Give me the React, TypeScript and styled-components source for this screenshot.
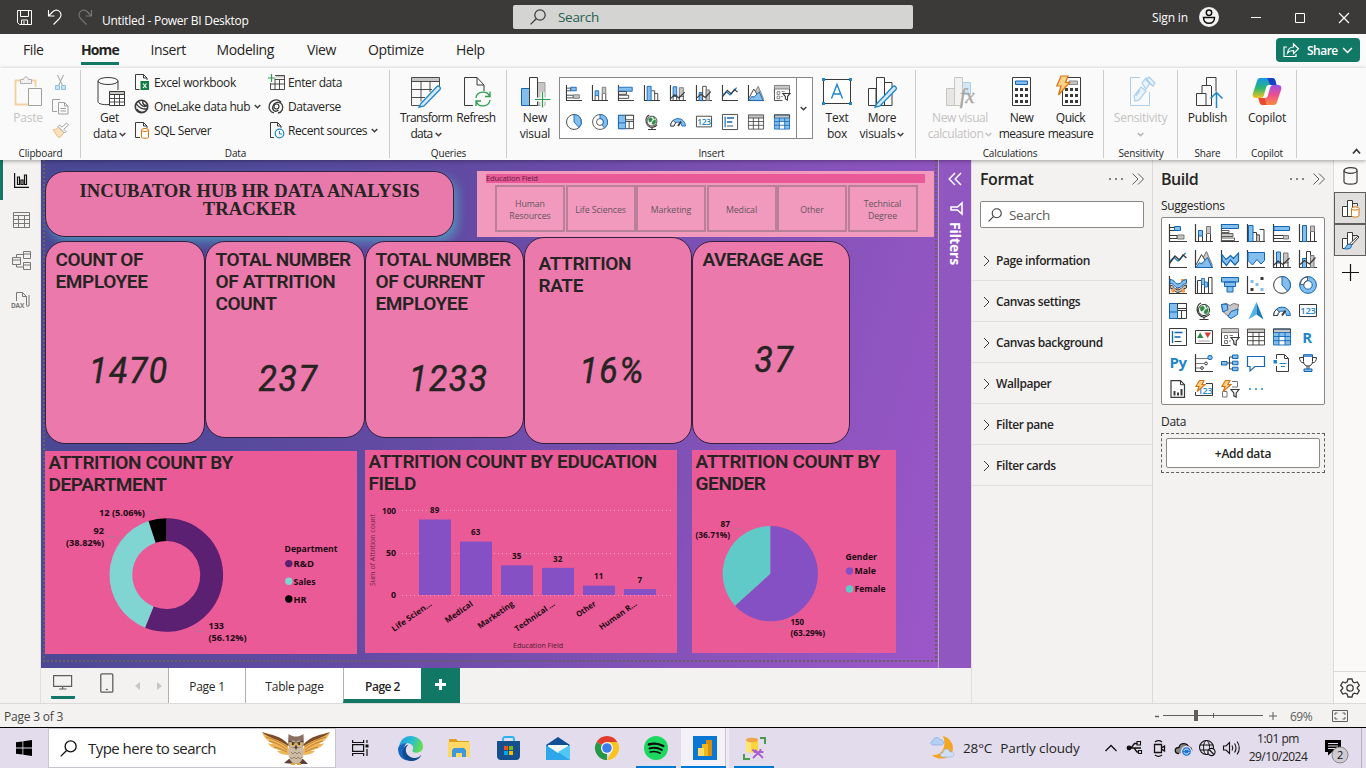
import React from "react";
import styled, { createGlobalStyle } from "styled-components";

const D = "#3b3a39";
const B = "#1366b4";
const L = "#83beec";
const G = "#c8c6c4";
const SKY = "#1f86c9";
const GREEN = "#117865";

const Global = createGlobalStyle`
  * { box-sizing: border-box; }
  body {
    margin: 0;
    overflow: hidden;
    font-family: "Open Sans", "Noto Sans", sans-serif;
    font-size: 12px;
    color: #252423;
    letter-spacing: -0.025em;
  }
  svg { display: block; flex: none; overflow: visible; }
`;

/* ---------- shell ---------- */
const Window = styled.div`
  width: 1366px;
  height: 768px;
  display: flex;
  flex-direction: column;
  background: #f3f2f1;
  overflow: hidden;
`;
const TitleBar = styled.header`
  height: 34px;
  flex: none;
  display: flex;
  align-items: center;
  background: #3b3a39;
  color: #fff;
`;
const QuickIcons = styled.div`
  width: 102px;
  padding-left: 16px;
  display: flex;
  align-items: center;
  gap: 14px;
`;
const DocTitle = styled.div`
  width: 411px;
  padding-top: 7px;
  font-size: 12px;
  letter-spacing: -0.27px;
`;
const TopSearch = styled.div`
  width: 400px;
  height: 24px;
  margin-right: 239px;
  padding-left: 17px;
  display: flex;
  align-items: center;
  gap: 12px;
  border-radius: 2px;
  background: #d4d4d2;
  color: #27604f;
  font-size: 13.5px;
`;
const SignIn = styled.div`
  width: 47px;
  font-size: 12px;
  letter-spacing: -0.15px;
`;
const WinControls = styled.div`
  display: flex;
  align-items: center;
  gap: 28px;
  padding-left: 29px;
`;

/* ---------- ribbon ---------- */
const TabStrip = styled.nav`
  height: 34px;
  flex: none;
  display: flex;
  align-items: flex-start;
  background: #fafafa;
  padding: 4px 6px 0 23px;
`;
const RibbonTab = styled.div<{ $w: number; $active?: boolean }>`
  width: ${(p) => p.$w}px;
  line-height: 24px;
  font-size: 14px;
  white-space: nowrap;
  letter-spacing: -0.4px;
  font-weight: ${(p) => (p.$active ? 700 : 400)};
  span {
    display: inline-block;
    height: 27px;
    letter-spacing: ${(p) => (p.$active ? "-0.9px" : "inherit")};
    border-bottom: ${(p) => (p.$active ? `3px solid ${GREEN}` : "none")};
  }
`;
const ShareButton = styled.button`
  width: 84px;
  height: 24px;
  margin-left: auto;
  padding: 0 0 0 7px;
  display: flex;
  align-items: center;
  gap: 4px;
  border: 0;
  border-radius: 4px;
  background: ${GREEN};
  color: #fff;
  font: 600 12px "Open Sans", sans-serif;
  letter-spacing: -0.5px;
  span { padding-left: 4px; }
`;
const Ribbon = styled.div`
  height: 92px;
  flex: none;
  display: flex;
  position: relative;
  z-index: 1;
  background: #fafafa;
  box-shadow: 0 1px 4px rgba(0, 0, 0, 0.35);
`;
const Group = styled.section<{ $w: number }>`
  width: ${(p) => p.$w}px;
  flex: none;
  display: flex;
  flex-direction: column;
  background: linear-gradient(#cfcdcb, #cfcdcb) right 2px / 1px 88px no-repeat;
`;
const GroupBody = styled.div<{ $pad?: number }>`
  height: 78px;
  display: flex;
  padding-left: ${(p) => p.$pad ?? 0}px;
`;
const GroupName = styled.div`
  height: 14px;
  line-height: 15px;
  text-align: center;
  font-size: 10px;
  letter-spacing: -0.15px;
`;
const BigButton = styled.div<{ $w: number; $off?: boolean; $ls?: number }>`
  width: ${(p) => p.$w}px;
  flex: none;
  display: flex;
  flex-direction: column;
  align-items: center;
  padding-top: 7px;
  font-size: 12px;
  line-height: 16px;
  text-align: center;
  white-space: nowrap;
  letter-spacing: ${(p) => p.$ls ?? -0.25}px;
  color: ${(p) => (p.$off ? "#c4c2c0" : "#252423")};
  > svg { margin-bottom: 2px; }
`;
const DropLine = styled.span`
  display: flex;
  align-items: center;
  justify-content: center;
  gap: 2px;
  min-height: 16px;
`;
const SmallColumn = styled.div<{ $w: number; $gap?: number }>`
  width: ${(p) => p.$w}px;
  display: flex;
  flex-direction: column;
  padding-top: 2px;
`;
const SmallButton = styled.div`
  height: 24px;
  display: flex;
  align-items: center;
  gap: 3px;
  white-space: nowrap;
  letter-spacing: -0.4px;
  > svg:last-child:not(:first-child) { margin-left: 1px; }
`;
const Gallery = styled.div`
  width: 254px;
  height: 62px;
  margin-top: 9px;
  display: flex;
  border: 1px solid #8a8886;
  background: #fff;
`;
const GalleryGrid = styled.div`
  width: 237px;
  padding: 0 0 0 1px;
  display: grid;
  grid-template-columns: repeat(9, 26px);
  grid-auto-rows: 29px;
  place-items: center;
  border-right: 1px solid #8a8886;
`;
const GalleryMore = styled.div`
  flex: 1;
  display: flex;
  align-items: center;
  justify-content: center;
  padding-right: 2px;
`;
const RibbonCollapse = styled.div`
  margin-left: auto;
  align-self: flex-end;
  padding: 0 5px 5px 0;
`;

/* ---------- work area ---------- */
const Work = styled.div`
  height: 543px;
  flex: none;
  display: flex;
`;
const ViewRail = styled.aside`
  width: 41px;
  flex: none;
  display: flex;
  flex-direction: column;
  border-right: 1px solid #e1dfdd;
`;
const ViewItem = styled.div<{ $on?: boolean }>`
  height: 40px;
  display: flex;
  align-items: center;
  justify-content: center;
  padding-right: 1px;
  border-left: 3px solid ${(p) => (p.$on ? GREEN : "transparent")};
`;
const Stage = styled.main`
  width: 931px;
  flex: none;
  display: flex;
  flex-direction: column;
  border-right: 1px solid #e1dfdd;
`;
const CanvasRow = styled.div`
  height: 508px;
  display: flex;
`;
const Canvas = styled.div`
  width: 897px;
  padding-left: 2px;
  background: linear-gradient(107deg, #4a4793 0%, #4d4896 16%, #664ba5 45%, #8452b8 73%, #9c57c9 100%);
`;
const ReportPage = styled.div`
  width: 894px;
  height: 502px;
  padding: 11px 2px 2px;
  background:
    repeating-linear-gradient(#66605f 0 2px, transparent 2px 4px) left top / 2px 100% no-repeat,
    repeating-linear-gradient(#66605f 0 2px, transparent 2px 4px) right top / 2px 100% no-repeat,
    repeating-linear-gradient(90deg, #66605f 0 2px, transparent 2px 4px) left bottom / 100% 2px no-repeat;
`;
const FilterPane = styled.div`
  width: 33px;
  display: flex;
  flex-direction: column;
  align-items: center;
  gap: 16px;
  border-left: 1px solid #b4a8b8;
  background: #9157c1;
  color: #fff;
  padding-top: 12px;
`;
const FilterText = styled.div`
  writing-mode: vertical-rl;
  font-size: 14px;
  font-weight: 700;
  letter-spacing: -0.1px;
  line-height: 20px;
  margin-top: -9px;
`;
const Row = styled.div<{ $mt?: number; $h?: number }>`
  display: flex;
  align-items: flex-start;
  margin-top: ${(p) => p.$mt ?? 0}px;
  height: ${(p) => p.$h}px;
`;
const Banner = styled.h1`
  width: 409px;
  height: 66px;
  margin: 0 23px 0 0;
  padding-top: 10px;
  border: 1px solid #33203f;
  border-radius: 20px;
  background: #ea79ab;
  box-shadow: 4px 5px 10px 0 rgba(80, 175, 200, 0.65);
  font: 700 18.6px/18px "Liberation Serif", serif;
  letter-spacing: 0.04px;
  text-align: center;
`;
const Slicer = styled.div`
  width: 457px;
  height: 66px;
  flex: none;
  padding: 3px 9px 0;
  background: #f29abd;
`;
const SlicerHead = styled.div`
  height: 9px;
  line-height: 9px;
  font-size: 7.5px;
  letter-spacing: -0.1px;
  color: #5a1f40;
  background: #ea5a98;
`;
const SlicerTiles = styled.div`
  display: grid;
  grid-template-columns: repeat(6, 70px);
  gap: 0.5px;
  padding: 2px 0 0 9px;
`;
const SlicerTile = styled.div`
  height: 47px;
  padding-top: 2px;
  display: flex;
  align-items: center;
  justify-content: center;
  text-align: center;
  border: 2px solid #b88099;
  font-size: 8.8px;
  line-height: 12px;
  letter-spacing: -0.1px;
  color: #66565f;
`;
const KpiCard = styled.div<{ $w: number; $h: number; $mt: number; $pl?: number; $drop: number }>`
  width: ${(p) => p.$w}px;
  height: ${(p) => p.$h}px;
  margin-top: ${(p) => p.$mt}px;
  flex: none;
  display: grid;
  grid-template-rows: 74px 40px;
  row-gap: ${(p) => p.$drop}px;
  padding-left: ${(p) => p.$pl ?? 9.5}px;
  border: 1px solid #33203f;
  border-radius: 20px;
  background: #eb79ab;
`;
const VisualTitle = styled.h2<{ $top?: number }>`
  margin: 0;
  padding-top: ${(p) => p.$top ?? 7}px;
  font: 600 19px/22px Roboto, sans-serif;
  letter-spacing: -0.38px;
  white-space: pre-line;
`;
const KpiValue = styled.div<{ $shift?: number }>`
  display: flex;
  align-items: center;
  justify-content: center;
  padding-right: ${(p) => p.$shift ?? 3}px;
  font: italic 400 37.5px/40px Roboto, sans-serif;
  -webkit-text-stroke: 0.5px #252423;
  letter-spacing: 1.7px;
  transform: scaleX(0.9);
`;
const ChartPanel = styled.div<{ $w: number; $mt?: number; $mr?: number }>`
  width: ${(p) => p.$w}px;
  height: 203px;
  margin: ${(p) => p.$mt ?? 0}px ${(p) => p.$mr ?? 0}px 0 0;
  flex: none;
  background: #ea5a96;
  ${VisualTitle} { height: 46px; padding: 1px 0 0 3.5px; }
`;
const ChartText = styled.text`
  font-family: "Open Sans", sans-serif;
  letter-spacing: 0;
`;

/* ---------- page tabs ---------- */
const PageBar = styled.div`
  height: 35px;
  display: flex;
`;
const LayoutSwitch = styled.div`
  width: 127px;
  display: flex;
  align-items: flex-start;
`;
const DesktopView = styled.div`
  width: 24px;
  margin: 6px 25px 0 10px;
  padding-bottom: 6px;
  border-bottom: 3px solid ${GREEN};
  border-radius: 1px;
`;
const PhoneView = styled.div`
  padding-top: 5px;
  margin-right: 21px;
`;
const Arrows = styled.div`
  display: flex;
  gap: 17px;
  padding-top: 14px;
`;
const PageTab = styled.div<{ $w: number; $on?: boolean }>`
  width: ${(p) => p.$w}px;
  border-left: 1px solid #b3b0ad;
  border-bottom: ${(p) => (p.$on ? `4px solid ${GREEN}` : "0")};
  background: #fff;
  text-align: center;
  line-height: 37px;
  letter-spacing: ${(p) => (p.$on ? "-0.5px" : "-0.25px")};
  font-weight: ${(p) => (p.$on ? 600 : 400)};
`;
const AddPage = styled.div`
  width: 39px;
  padding-bottom: 2px;
  display: flex;
  align-items: center;
  justify-content: center;
  background: ${GREEN};
`;

/* ---------- side panes ---------- */
const Pane = styled.aside<{ $w: number }>`
  width: ${(p) => p.$w}px;
  flex: none;
  border-right: 1px solid #dddbd9;
`;
const PaneHead = styled.div`
  height: 38px;
  display: flex;
  align-items: center;
  gap: 7px;
  padding: 0 7px 0 8px;
  h3 {
    margin: 0 auto 0 0;
    font-size: 16px;
    font-weight: 600;
    letter-spacing: -0.45px;
  }
`;
const PaneSearch = styled.div`
  width: 164px;
  height: 27px;
  margin: 3px 0 12px 8px;
  padding-left: 7px;
  display: flex;
  align-items: center;
  gap: 7px;
  border: 1px solid #8a8886;
  border-radius: 2px;
  background: #fff;
  color: #605e5c;
  font-size: 13.5px;
`;
const FormatRow = styled.div`
  height: 41px;
  padding-top: 1px;
  display: flex;
  align-items: center;
  gap: 5px;
  padding-left: 11px;
  border-bottom: 1px solid #e1dfdd;
  font-weight: 600;
  letter-spacing: -0.4px;
`;
const FieldLabel = styled.div`
  padding-left: 8px;
  line-height: 16px;
`;
const VisualPicker = styled.div`
  width: 164px;
  height: 188px;
  margin: 3px 0 9px 8px;
  padding: 2px 0 0 3px;
  display: grid;
  grid-template-columns: repeat(6, 26px);
  grid-auto-rows: 26px;
  place-items: center;
  border: 1px solid #8a8886;
  border-radius: 2px;
  background: #fff;
`;
const DropZone = styled.div`
  width: 164px;
  height: 40px;
  margin: 3px 0 0 8px;
  padding: 4px;
  border: 1px dashed #605e5c;
`;
const AddData = styled.div`
  height: 30px;
  line-height: 29px;
  text-align: center;
  border: 1px solid #8a8886;
  border-radius: 2px;
  background: #fff;
  font-weight: 600;
`;
const PaneRail = styled.aside`
  flex: 1;
  display: flex;
  flex-direction: column;
  background: #faf9f8;
`;
const RailButton = styled.div<{ $on?: boolean; $h: number }>`
  height: ${(p) => p.$h}px;
  display: flex;
  align-items: center;
  justify-content: center;
  border: 1px solid ${(p) => (p.$on ? "#605e5c" : "transparent")};
  background: ${(p) => (p.$on ? "#e1dfdd" : "transparent")};
`;
const RailSettings = styled.div`
  margin-top: auto;
  height: 32px;
  display: flex;
  align-items: center;
  justify-content: center;
  border-top: 1px solid #dddbd9;
`;

/* ---------- status + taskbar ---------- */
const StatusBar = styled.footer`
  height: 25px;
  flex: none;
  display: flex;
  align-items: center;
  justify-content: space-between;
  padding: 1px 18px 0 4px;
  border-top: 1px solid #dddbd9;
  border-bottom: 1px solid #000;
  color: #484644;
  letter-spacing: -0.2px;
`;
const ZoomControls = styled.div`
  display: flex;
  align-items: center;
  color: #605e5c;
  letter-spacing: -0.5px;
  span { width: 55px; padding-left: 13px; }
`;
const Taskbar = styled.div`
  height: 40px;
  flex: none;
  display: flex;
  background: #e3dcec;
`;
const StartButton = styled.div`
  width: 48px;
  display: flex;
  align-items: center;
  justify-content: center;
`;
const TaskSearch = styled.div`
  width: 288px;
  padding-left: 11px;
  display: flex;
  align-items: center;
  gap: 11px;
  border: 1px solid #c9c5cf;
  background: #fff;
  font-size: 15px;
  letter-spacing: -0.53px;
  span { width: 162px; }
`;
const TaskItem = styled.div<{ $w?: number; $run?: boolean; $active?: boolean }>`
  width: ${(p) => p.$w ?? 49}px;
  margin-left: ${(p) => (p.$active ? 2 : 0)}px;
  display: flex;
  align-items: center;
  justify-content: center;
  background:
    ${(p) => (p.$run ? "linear-gradient(#0078d7, #0078d7) center bottom / 40px 2px no-repeat" : p.$active ? "linear-gradient(#0078d7, #0078d7) left bottom / 45px 2px no-repeat" : "none")}
    ${(p) => (p.$active ? ", linear-gradient(90deg, #f4f1f8 44px, #c9c3d2 44px, #c9c3d2 45px, #efebf4 45px)" : "")};
`;
const Tray = styled.div`
  margin-left: auto;
  display: flex;
  align-items: center;
`;
const Weather = styled.div`
  width: 172px;
  display: flex;
  align-items: center;
  gap: 8px;
  font-size: 13.5px;
  letter-spacing: -0.12px;
`;
const Clock = styled.div`
  width: 78px;
  padding-right: 6px;
  font-size: 12px;
  line-height: 18px;
  text-align: center;
  letter-spacing: -0.5px;
`;

/* ---------- glyphs ---------- */
const Chevron = ({ c = D, s = 7, w = 1.6 }: { c?: string; s?: number; w?: number }) => (
  <svg width={s} height={s} viewBox="0 0 8 8" fill="none" stroke={c} strokeWidth={w}><path d="M.8 2.2 4 5.4l3.2-3.2" /></svg>
);
const Magnifier = ({ s = 16, c = D }: { s?: number; c?: string }) => (
  <svg width={s} height={s} viewBox="0 0 16 16" fill="none" stroke={c} strokeWidth="1.25"><circle cx="10" cy="6" r="5.2" /><path d="M6.2 9.8.6 15.4" /></svg>
);
const DoubleChevron = ({ c = "#605e5c", flip, w = 1 }: { c?: string; flip?: boolean; w?: number }) => (
  <svg width="14" height="14" viewBox="0 0 14 14" fill="none" stroke={c} strokeWidth={w}>
    <path d={flip ? "M7 1 1.2 7 7 13M13 1 7.2 7 13 13" : "M1.5 1.5 7 7l-5.5 5.5M7 1.5 12.5 7 7 12.5"} />
  </svg>
);
const Dots = ({ c = "#605e5c" }: { c?: string }) => (
  <svg width="16" height="4" viewBox="0 0 16 4" fill={c}><circle cx="2" cy="2" r="1" /><circle cx="8" cy="2" r="1" /><circle cx="14" cy="2" r="1" /></svg>
);

const axis = <path d="M.5 0V17.500H18" stroke={D} strokeWidth="1.200" />;
const globe = (
  <g>
    <circle cx="9" cy="8" r="5.600" fill="#f3f2f1" stroke={D} />
    <path d="M5 5.500 8 4l1.500 2L8 8.500 6 9zM10 8l3-1.500v3L11 12l-2-1zM10.500 3l2 1.200-1 1.600z" fill="#2e8b46" stroke="#2e8b46" strokeWidth=".6" />
    <path d="M6 1C1.500 3 .8 9.500 4.500 13s8 2 10.300-1M9 14.500v3M4.500 17.500h9" stroke={D} strokeWidth="1.200" />
  </g>
);
const bolt = <path d="M4.500.5H9L7 4.500h3L2.200 11.500 4 6.500H.8z" fill="#fcd28b" stroke="#d9730d" strokeWidth="1.100" />;
const funnel = <path d="M10 9.500h8l-2.800 3.500v4l-2.400-1.200V13z" fill="#fff" stroke={D} strokeWidth="1.200" />;

const ICONS: Record<string, React.ReactNode> = {
  stackBar: <>{axis}<path d="M1 3.500h4.500v3H1M1 11.500h7v3H1" stroke={D} /><path d="M5.500 2.500h6v4h-6z" fill={L} stroke={B} /><path d="M8.500 11h6.500v4H8.500z" fill={G} stroke="#797775" /></>,
  stackCol: <>{axis}<path d="M3.500 12v5.500M7.500 12v5.500M11.500 9.500v8M15.500 9.500v8" stroke={D} /><path d="M3.500 6.500h4V12h-4z" fill={L} stroke={B} /><path d="M11.500 2.500h4v7h-4z" fill={G} stroke="#797775" /></>,
  clusterBar: <>{axis}<path d="M.5 2.500h15.500v4.500H.5z" fill={L} stroke={B} /><path d="M.5 7.500h9v3h-9M.5 11.500h11.500v3.500H.5" stroke={D} /></>,
  clusterBar2: <>{axis}<path d="M.5.500h17v4H.5z" fill={L} stroke={B} /><path d="M.5 6.500h7.500v2H.5zM.5 14h13v2.500H.5z" fill="#fff" stroke="#605e5c" /><path d="M.5 9.500h11.500v3H.5z" fill={G} stroke="#605e5c" /></>,
  clusterCol: <>{axis}<path d="M3.500 1.500H8v16H3.500z" fill={L} stroke={B} /><path d="M8.500 6.500H12v11M12 9.500h3.500v8" stroke={D} /></>,
  clusterCol2: <>{axis}<path d="M1.500 1.500H6v16H1.500z" fill={L} stroke={B} /><path d="M6 8.500h3.500v9M12.500 5.500H17v12M9.500 11h3v6.500" stroke={D} /><path d="M9.500 11h3v6.500h-3z" fill={G} stroke="#605e5c" /></>,
  fullBar: <>{axis}<path d="M1 2.500h15.500v4H1z" fill={L} stroke={B} /><path d="M1 11.500h9.500v3H1" stroke={D} /><path d="M10.500 11.500h5v3.500h-5z" fill={G} stroke="#797775" /></>,
  fullCol: <>{axis}<path d="M3.500 1.500h4v16h-4z" fill={L} stroke={B} /><path d="M11.500 7.500h4v10h-4z" stroke={D} /><path d="M11.500 2h4v5.500h-4z" fill={G} stroke="#797775" /></>,
  lineStack: <>{axis}<path d="M3.500 2h4v11h-4z" fill={L} stroke={B} /><path d="M10.500 3h4.500v10h-4.500z" fill={G} stroke="#797775" /><path d="M3.500 13v4.500M7.500 11v6.500M10.500 12v5.500M15 12v5.500" stroke={D} /><path d="m1 15 4-4 5 3.500L16.500 8" stroke={D} strokeWidth="1.300" /></>,
  lineCluster: <>{axis}<path d="M3.500 8.500h4v9h-4z" fill={L} stroke={B} /><path d="M7.500 1.500h4v16h-4z" fill="#fff" stroke={D} /><path d="M11.500 5.500H15v12h-3.500z" fill={G} stroke="#797775" /><path d="m1 14.500 4.500-4L10.500 14l6-6.500" stroke={D} strokeWidth="1.300" /></>,
  line: <>{axis}<path d="m.5 11.500 4.500-4 4 3.500 7.500-8" stroke={SKY} strokeWidth="1.500" /><path d="M.5 13.500 6 6l4.500 4L14 5l3.500 3" stroke={D} strokeWidth="1.300" /></>,
  area: <>{axis}<path d="M5.500 12 11.500 1.500 17 14.500v3H9z" fill={G} stroke="#797775" /><path d="M1 15 6.500 4.500 10.500 11" fill="#fff" stroke={D} /><path d="m1 17.500 3.500-5 2 1.500 6-6.500L17 17.500z" fill={L} stroke={B} /></>,
  stackArea: <>{axis}<path d="m1 4.500 4 5 4.500-4 3 3 5-5.500v8l-3.500 4-4.500-5-4 5.500L1 10.500z" fill={L} stroke={B} strokeWidth="1.200" /></>,
  fullArea: <>{axis}<path d="M1 2.500h16.500v8L14 14 10 9.500 5.500 15 1 10.500z" fill={L} stroke={B} /></>,
  ribbon: <>{axis}<path d="M2.500 4.500h3v3h-3zM12 3h4v3h-4zM2.500 12.500h3v3h-3zM12 13h4v3h-4zM7 10h3.500v3H7z" fill="#f59b42" /><path d="M1 3.500c5 0 4.500 4.500 8 4.500s4-4.500 8.500-4.500v4c-4.500 0-5 4.500-8.500 4.500S6 7.500 1 7.500z" fill={L} stroke={B} /><path d="M1 9c4 0 4.500 5 8 5s4-5 8.500-5v3c-4 0-5 4.500-8.500 4.500S5 12 1 12z" fill={G} stroke={D} /><path d="M2.500 13h3v3.500h-3zM12.500 13h3v3.500h-3z" fill="#f59b42" /></>,
  waterfall: <>{axis}<path d="M2.500 4.500h4v13M6.500 4.500v13M2.500 4.500v13M13.500 1.500H17v16h-3.500zM9.500 8.500V17M13.500 10v7.500" stroke={D} /><path d="M6.500 2.500h3v6h-3zM9.500 6h3v5h-3z" fill={L} stroke={B} strokeWidth=".8" /></>,
  funnelChart: <path d="M.5 1.500h17v4.500H.5zM3.500 6h11v4.500h-11zM6 10.500h6V16H6z" fill={L} stroke={B} />,
  scatter: <>{axis}<path d="M13.500 1h3v3h-3zM3.500 12h3v3h-3z" fill={D} /><path d="M3.500 4h3v3h-3zM8.500 7h3v3h-3zM13.500 12h3v3h-3z" fill={L} /></>,
  pie: <><circle cx="9" cy="9" r="8.400" fill="#fff" stroke={D} /><path d="M9 .6A8.400 8.400 0 0 1 14.600 15.200L9 9z" fill={L} stroke={B} /></>,
  donut: <><circle cx="9" cy="9" r="6.300" stroke={L} strokeWidth="4.200" /><circle cx="9" cy="9" r="8.400" stroke={B} /><circle cx="9" cy="9" r="4.200" stroke={B} /><path d="M1.500 8.500h3.300C5 6.500 6.500 4.800 8.500 4.600V1.200C4.500 1.200 1.500 4.500 1.500 8.500z" fill="#fff" stroke={D} strokeWidth=".8" /></>,
  donutSmall: <><circle cx="9" cy="9" r="8.400" stroke={D} strokeWidth=".9" /><circle cx="9" cy="9" r="3.900" stroke={D} strokeWidth=".9" /><path d="M9 .6a8.400 8.400 0 0 1 5 15.200l-2.600-3.700A3.900 3.900 0 0 0 9 5.100z" fill={L} stroke={B} /></>,
  treemap: <><path d="M.5 1.500h17v15H.5zM8.500 8.500h9M12.500 8.500v8" stroke={D} fill="#fff" /><path d="M.5 1.500h8v15h-8zM.5 10h8" fill={L} stroke={B} /><path d="M8.500 1.500h9v5h-9z" fill="#fff" stroke={D} /></>,
  globe,
  shapeMap: <><path d="M.5 2.500 5 1.500l4 2 3.500-2 5 1-1 7-6 6-5-2.500-4-4z" fill={G} stroke="#797775" /><path d="M.5 2.500 6 2l1 5.500-5 2.500zM10 9.500l7-2.500-.5 5.500-6.500 4-3-2z" fill={L} stroke={B} /></>,
  arrow: <><path d="M9.500 0 1.500 17.500l8-5z" fill="#4fb3e8" /><path d="m9.500 0 7 17.500-7-5z" fill="#1a77b8" /></>,
  gauge: <><path d="M.6 13.500a8.400 8.400 0 0 1 16.800 0h-4a4.400 4.400 0 0 0-8.800 0z" fill={L} stroke={B} /><path d="M.6 13.500a8.400 8.400 0 0 1 3-6.400l2.800 3a4.400 4.400 0 0 0-1.800 3.400z" fill="#fff" stroke={D} /><path d="m9 13.500 3.500-5" stroke={D} strokeWidth="2" /></>,
  card: <><path d="M.5 2.500h17v12H.5z" fill="#fff" stroke={D} /><text x="9" y="12.300" fontSize="9.500" fontWeight="600" textAnchor="middle" fill={SKY} letterSpacing="-.3">123</text></>,
  multiCard: <><path d="M.5.500h17v17H.5z" fill="#fff" stroke={D} /><path d="M3.500 3v12" stroke={B} strokeWidth="1.300" /><path d="M5.500 4.500h8M5.500 9h6" stroke={B} strokeWidth="1.700" /><path d="M5.500 13.500h7" stroke={D} /></>,
  kpi: <><path d="M.5 2.500h17v13H.5z" fill="#fff" stroke={D} /><path d="m5.200 4.500 3.200 5.500H2z" fill="#2e8b46" /><path d="M9.500 4.500H16L12.700 10z" fill="#d83b3b" /><path d="M3.500 13h11" stroke="#a19f9d" /></>,
  slicer: <><path d="M.5.500h17v4H.5z" fill={G} stroke="#797775" /><path d="M.5 4.500v13h9M17.500 4.500V9" stroke={D} /><path d="M3.500 7.500h3v3h-3zM3.500 12.500h3v3h-3zM8.500 7.500H12M8 13h2" stroke="#797775" />{funnel}</>,
  table: <><path d="M.5 1h17v3.500H.5z" fill={G} /><path d="M.5 1h17v16H.5zM.5 4.500h17M.5 8.500h17M.5 12.700h17M6 4.500V17M12 4.500V17" stroke={D} strokeWidth=".9" /></>,
  matrix: <><path d="M.5 4.500h5.500v12.500H.5zM6 4.500h11.500V8.500H6zM12 8.500h5.500V17H12z" fill={L} /><path d="M.5 1h17v3.500H.5z" fill={G} /><path d="M.5 1h17v16H.5zM.5 4.500h17M.5 8.500h17M.5 12.700h17M6 4.500V17M12 4.500V17" stroke={B} strokeWidth=".9" /><path d="M.5 4.500V1h17v3.500" stroke={D} /></>,
  r: <text x="8" y="14.500" fontSize="15" fontWeight="700" textAnchor="middle" fill={SKY}>R</text>,
  py: <text x="9" y="14" fontSize="15" fontWeight="700" textAnchor="middle" fill={SKY} letterSpacing="-.6">Py</text>,
  influencer: <>{axis}<path d="M1 4.500h12M1 9.500h8M1 14h4" stroke="#797775" /><circle cx="15" cy="3.500" r="2.200" fill={L} stroke={B} /><circle cx="11" cy="9.500" r="1.400" stroke={D} /><circle cx="7" cy="14" r="1.400" stroke={D} /></>,
  decomposition: <><path d="M6 9h6M8.500 3v12M8.500 3H12M8.500 15H12" stroke={D} /><path d="M.5 7.500H6V11H.500zM11.500 1h5.500v3.500h-5.500zM11.500 7.200h5.500v3.500h-5.500zM11.500 13.200h5.500v3.500h-5.500z" fill={L} stroke={B} /></>,
  qna: <path d="M.5 2.500h17v10H8l-5 4.500v-4.500H.500z" fill="#fff" stroke={B} strokeWidth="1.200" />,
  narrative: <><path d="M3.500 5V.5h8l4 4v13h-12V12" stroke={D} /><path d="M11.500.5v4h4" stroke={D} /><path d="M.5 6h3.500v3.500H.500z" fill={SKY} /><path d="M6.500 9.500h7M8 12.500h4" stroke={SKY} strokeWidth="1.200" /></>,
  trophy: <><path d="M4.500 1.500h9v6c0 3-2 4.500-4.500 4.500S4.500 10.500 4.500 7.500z" fill="#fff" stroke={D} /><path d="M4.500 3.500h-4c0 3 1.500 5.500 4.500 5.500M13.500 3.500h4c0 3-1.500 5.500-4.500 5.500M8 12v3M10 12v3" stroke={D} /><path d="M4.500.700h9v1.500h-9zM5 15h8v2.500H5z" fill={L} stroke={B} /></>,
  paginated: <><path d="M2 .7h9.500l4 4v12.600H2z" fill="#fff" stroke={D} strokeWidth="1.200" /><path d="M11.500.700v4h4" stroke={D} /><path d="M4.500 11h2v4.500h-2zM8 12.500h2v3H8zM11.500 9h2v6.500h-2z" fill={D} /></>,
  cardNew: <><path d="M11 3.500h6.500v12H.500V12" stroke={D} /><text x="10" y="13.600" fontSize="9" fontWeight="600" textAnchor="middle" fill={SKY} letterSpacing="-.3">123</text>{bolt}</>,
  slicerNew: <><path d="M11 1.500h5.500v5.500H11M1.500 11.500H6V17H1.500z" stroke="#797775" />{bolt}{funnel}</>,
};
const VisualIcon = ({ name, s }: { name: string; s: number }) =>
  name === "dots" ? <Dots c={SKY} /> : <svg width={s} height={s} viewBox="0 0 18 18" fill="none">{ICONS[name]}</svg>;

const RIBBON_ICONS = ["stackBar", "stackCol", "clusterBar", "clusterCol", "lineStack", "lineCluster", "line", "area", "slicer",
  "pie", "donutSmall", "treemap", "globe", "gauge", "card", "multiCard", "table", "matrix"];
const BUILD_ICONS = ["stackBar", "stackCol", "clusterBar2", "clusterCol2", "fullBar", "fullCol",
  "line", "area", "stackArea", "fullArea", "lineStack", "lineCluster",
  "ribbon", "waterfall", "funnelChart", "scatter", "pie", "donut",
  "treemap", "globe", "shapeMap", "arrow", "gauge", "card",
  "multiCard", "kpi", "slicer", "table", "matrix", "r",
  "py", "influencer", "decomposition", "qna", "narrative", "trophy",
  "paginated", "cardNew", "slicerNew", "dots"];

const Big = ({ w = 30, children }: { w?: number; children: React.ReactNode }) => (
  <svg width={w} height="33" viewBox={`0 0 ${w} 33`} fill="none" stroke={D}>{children}</svg>
);
const Small = ({ children }: { children: React.ReactNode }) => (
  <svg width="17" height="17" viewBox="0 0 17 17" fill="none" stroke={D}>{children}</svg>
);
const pencil = <path d="M11 28.500 27 11.500c1.500-1.500 4.500 1 3 3L14 31l-5 1.200z" fill="#d5ebf9" stroke={SKY} strokeWidth="1.300" />;

/* ---------- charts ---------- */
const polar = (cx: number, cy: number, r: number, deg: number) => {
  const a = ((deg - 90) * Math.PI) / 180;
  return `${(cx + r * Math.cos(a)).toFixed(2)} ${(cy + r * Math.sin(a)).toFixed(2)}`;
};
const slice = (cx: number, cy: number, r: number, r0: number, a: number, b: number) => {
  const big = b - a > 180 ? 1 : 0;
  return r0
    ? `M${polar(cx, cy, r, a)}A${r} ${r} 0 ${big} 1 ${polar(cx, cy, r, b)}L${polar(cx, cy, r0, b)}A${r0} ${r0} 0 ${big} 0 ${polar(cx, cy, r0, a)}Z`
    : `M${cx} ${cy}L${polar(cx, cy, r, a)}A${r} ${r} 0 ${big} 1 ${polar(cx, cy, r, b)}Z`;
};
const Mark = ({ x, y, w, s = 9, t, c = "#1b0a14", wt = 700 }: { x: number; y: number; w: number; s?: number; t: string; c?: string; wt?: number }) => (
  <ChartText x={x} y={y} fontSize={s} fontWeight={wt} fill={c} textLength={w} lengthAdjust="spacingAndGlyphs">{t}</ChartText>
);

const DepartmentChart = () => (
  <svg width="312" height="157" viewBox="45 497 312 157">
    <path d={slice(166.3, 575, 56.8, 34, 0, 202)} fill="#5b2071" />
    <path d={slice(166.3, 575, 56.8, 34, 202, 341.8)} fill="#80d5d2" />
    <path d={slice(166.3, 575, 56.8, 34, 341.8, 360)} fill="#000" />
    <g fill="none" stroke="#b87096"><path d="M148 512h8l1.500 6M107 536.500h8l6 4M194 626l2.500 5.500h8" /></g>
    <Mark x={99} y={515.7} w={46} t="12 (5.06%)" />
    <Mark x={93.5} y={533.7} w={10.5} t="92" />
    <Mark x={66} y={545.7} w={38} t="(38.82%)" />
    <Mark x={208.5} y={628.7} w={15.5} t="133" />
    <Mark x={208.5} y={640.7} w={38} t="(56.12%)" />
    <Mark x={284.5} y={552} w={53} s={9.6} t="Department" />
    {[["R&D", "#5b2071", 563.6, 20.5], ["Sales", "#80d5d2", 581.3, 22], ["HR", "#000", 599, 13]].map(([t, c, y, w]) => (
      <g key={t as string}>
        <circle cx="288.800" cy={y as number} r="3.700" fill={c as string} />
        <Mark x={293.5} y={(y as number) + 3.6} w={w as number} s={9.6} t={t as string} />
      </g>
    ))}
  </svg>
);

const BARS: [string, number, number, number][] = [
  ["Life Scien…", 89, 434, 47], ["Medical", 63, 475, 32], ["Marketing", 35, 516, 42],
  ["Technical …", 32, 557, 47], ["Other", 11, 598, 22], ["Human R…", 7, 639, 44],
];
const EducationChart = () => (
  <svg width="312" height="157" viewBox="365 496 312 157">
    <g stroke="#f3a3c4" strokeDasharray="1 3"><path d="M402 510.500h272M402 553.500h272M402 595.500h272" /></g>
    {BARS.map(([name, v, x, w]) => (
      <g key={name}>
        <rect x={x - 15} y={595 - v * 0.848} width="32" height={v * 0.848} fill="#8450c4" />
        <ChartText x={x + 0.7} y={595 - v * 0.848 - 6.2} fontSize="8" fontWeight="700" textAnchor="middle" fill="#1b0a14">{v}</ChartText>
        <g transform={`translate(${x - 1.5} ${605}) rotate(-35)`}>
          <Mark x={-w} y={0} w={w} s={8} t={name} />
        </g>
      </g>
    ))}
    <Mark x={382} y={513.5} w={14} s={8} t="100" />
    <Mark x={386} y={556.3} w={10} s={8} t="50" />
    <Mark x={391} y={598.3} w={5} s={8} t="0" />
    <g transform="translate(375 586) rotate(-90)"><Mark x={0} y={0} w={72} s={7.5} wt={400} c="#6b2a4b" t="Sum of Attrition count" /></g>
    <Mark x={513} y={648} w={50} s={7.5} wt={400} c="#4b1c35" t="Education Field" />
  </svg>
);

const GenderChart = () => (
  <svg width="204" height="157" viewBox="692 496 204 157">
    <path d={slice(770.3, 573.7, 47.6, 0, 0, 227.8)} fill="#8450c4" />
    <path d={slice(770.3, 573.7, 47.6, 0, 227.8, 360)} fill="#5fcac7" />
    <g fill="none" stroke="#b87096"><path d="M733 528.500h8l3.500 4.500M778.500 622v4.500h9" /></g>
    <Mark x={720.5} y={527} w={9.5} s={8} t="87" />
    <Mark x={695.5} y={538} w={34.5} s={8} t="(36.71%)" />
    <Mark x={790.5} y={625} w={13.5} s={8} t="150" />
    <Mark x={790.5} y={636} w={34.5} s={8} t="(63.29%)" />
    <Mark x={845.5} y={560} w={31.5} s={9.3} t="Gender" />
    <circle cx="849.500" cy="571" r="3.700" fill="#8450c4" /><Mark x={854.5} y={574} w={21.5} s={9.5} t="Male" />
    <circle cx="849.500" cy="589" r="3.700" fill="#5fcac7" /><Mark x={854.5} y={592} w={31} s={9.5} t="Female" />
  </svg>
);

const Owl = () => (
  <svg width="70" height="36" viewBox="0 0 70 36">
    <path d="M1 2c6 3 16 5 26 14l2 9c-6 0-10-1-13-4 2 0 3 0 4-.5C14 19 9 17 7 13c2 1 4 1 5 1C7 11 3 8 1 2z" fill="#efb556" />
    <path d="M69 2c-6 3-16 5-26 14l-2 9c6 0 10-1 13-4-2 0-3 0-4-.5C56 19 61 17 63 13c-2 1-4 1-5 1 5-3 9-6 11-12z" fill="#efb556" />
    <path d="M1 2c8 3 19 3 27 13l-1 1C18 9 7 8 1 2zM69 2c-8 3-19 3-27 13l1 1C52 9 63 8 69 2z" fill="#7a4b28" />
    <path d="M8 11c8 2 13 5 18 9M13 17c5 1 9 3 13 5M5 7c9 3 15 5 21 10M62 11c-8 2-13 5-18 9M57 17c-5 1-9 3-13 5M65 7c-9 3-15 5-21 10" stroke="#b97a35" fill="none" strokeWidth=".9" />
    <path d="M28 29h14l5 5c-4 0-20 0-24-1z" fill="#5c4038" />
    <ellipse cx="35" cy="22" rx="7.800" ry="12" fill="#cdbba3" />
    <path d="M30 22l2 2 2-2 2 2 2-2 2 2M29 27l2 2 2-2 2 2 2-2 2 2 2-2" stroke="#8b735d" fill="none" strokeWidth=".8" />
    <path d="M27.500 4c3 2 5 2.500 7.500 2.500s4.500-.5 7.500-2.500c0 4 1 9-.5 12-3 3-11 3-14 0-1.500-3-.5-8-.5-12z" fill="#8a6f60" />
    <ellipse cx="31.500" cy="14" rx="3.300" ry="3.400" fill="#cdb9a2" /><ellipse cx="38.500" cy="14" rx="3.300" ry="3.400" fill="#cdb9a2" />
    <circle cx="31.700" cy="14" r="2" fill="#f2b61c" /><circle cx="38.300" cy="14" r="2" fill="#f2b61c" />
    <circle cx="31.900" cy="14" r="1" fill="#111" /><circle cx="38.100" cy="14" r="1" fill="#111" />
    <path d="m28 11 6 2M42 11l-6 2" stroke="#4b3a33" strokeWidth="1.200" />
    <path d="m35 15 1.300 2.500L35 20l-1.300-2.500z" fill="#4b3a33" />
    <path d="M30 33h4v2h-4zM36 33h4v2h-4z" fill="#e2a23c" />
  </svg>
);

export default function App() {
  return (
    <Window>
      <Global />
      <TitleBar>
        <QuickIcons>
          <svg width="17" height="17" viewBox="0 0 17 17" fill="none" stroke="#fff"><path d="M1.500 1.500h14v14h-12l-2-2zM4.500 1.500v6h8v-6M5.500 15.500v-4.500h6v4.500M8 12v3" /></svg>
          <svg width="16" height="17" viewBox="0 0 16 17" fill="none" stroke="#fff" strokeWidth="1.100"><path d="M1.500 1v6h6M1.500 7 6 2.500C9.500-.5 14 2 14 6c0 2-1 3-2 4l-5.500 5.500" /></svg>
          <svg width="16" height="17" viewBox="0 0 16 17" fill="none" stroke="#797775" strokeWidth="1.100"><path d="M14.500 1v6h-6M14.500 7 10 2.500C6.500-.5 2 2 2 6c0 2 1 3 2 4l5.500 5.500" /></svg>
        </QuickIcons>
        <DocTitle>Untitled - Power BI Desktop</DocTitle>
        <TopSearch><Magnifier />Search</TopSearch>
        <SignIn>Sign in</SignIn>
        <svg width="20" height="20" viewBox="0 0 20 20"><circle cx="10" cy="10" r="10" fill="#f3f2f1" /><g fill="none" stroke="#111" strokeWidth="1.500"><circle cx="10" cy="5.800" r="2.700" /><path d="M4.500 10.500h11c0 4-2.500 5.800-5.500 5.800s-5.500-1.800-5.500-5.800z" /></g></svg>
        <WinControls>
          <svg width="16" height="16" viewBox="0 0 16 16" stroke="#fff"><path d="M3 8.500h10" /></svg>
          <svg width="16" height="16" viewBox="0 0 16 16" stroke="#fff" fill="none"><path d="M3.500 4.500h9v9h-9z" /></svg>
          <svg width="16" height="16" viewBox="0 0 16 16" stroke="#fff" strokeWidth="1.200"><path d="m3 4 10 10M13 4 3 14" /></svg>
        </WinControls>
      </TitleBar>

      <TabStrip>
        <RibbonTab $w={58}><span>File</span></RibbonTab>
        <RibbonTab $w={69.5} $active><span>Home</span></RibbonTab>
        <RibbonTab $w={66}><span>Insert</span></RibbonTab>
        <RibbonTab $w={90.5}><span>Modeling</span></RibbonTab>
        <RibbonTab $w={61}><span>View</span></RibbonTab>
        <RibbonTab $w={88}><span>Optimize</span></RibbonTab>
        <RibbonTab $w={60}><span>Help</span></RibbonTab>
        <ShareButton>
          <svg width="16" height="16" viewBox="0 0 16 16" fill="none" stroke="#fff" strokeWidth="1.200"><path d="M4 5H1v9.500h12V12M4.500 11c.5-4 3-6 6-6V2l5 4.800-5 4.800V8.500c-3 0-4.500.5-6 2.500z" /></svg>
          <span>Share</span><Chevron c="#fff" s={11} w={1.1} />
        </ShareButton>
      </TabStrip>

      <Ribbon>
        <Group $w={81}>
          <GroupBody $pad={4}>
            <BigButton $w={48} $off>
              <svg width="28" height="33" viewBox="0 0 28 33" fill="none"><path d="M14 29.500H1.500v-24h5M16 5.500h5.500V12" stroke="#f5cf9f" strokeWidth="1.800" /><path d="M6.500 8.500v-4h3c.5-3.500 4.500-3.500 5 0h3v4z" fill="#f3f2f1" stroke="#b3b0ad" /><path d="M14.500 13.500h13v17h-13z" fill="#fafafa" stroke="#a19f9d" /></svg>
              Paste
            </BigButton>
            <SmallColumn $w={20}>
              <SmallButton><Small><path d="m5.500 1 5 10.500M11.500 1l-5 10.500" stroke="#a19f9d" /><path d="M3.500 11.500h4v4h-4zM9.500 11.500h4v4h-4z" fill="#c7e3f6" stroke="#8cc0e4" /></Small></SmallButton>
              <SmallButton><Small><path d="M5 13.500H.5V1.500h7.500M6.500 4.500h6l3.500 3.500v8H6.500z" stroke="#a19f9d" /><path d="M8.500 10.500H14M8.500 13H14M12.500 4.500V8H16" stroke="#a19f9d" /></Small></SmallButton>
              <SmallButton><Small><path d="m6.500 5 5.500 5.500-4 5-2.500-1-4.500-7c2 .5 4-.5 5.500-2.500z" fill="#fbe0be" stroke="#efbb80" /><path d="m6 4.500 6.500 6.500 1.500-1.500-2.300-2.300L16.500 3 14.500 1 10 5.200 7.500 3z" fill="#fff" stroke="#a19f9d" /></Small></SmallButton>
            </SmallColumn>
          </GroupBody>
          <GroupName>Clipboard</GroupName>
        </Group>

        <Group $w={309}>
          <GroupBody $pad={4}>
            <BigButton $w={49}>
              <Big><path d="M14 29.500C8 30 3 29 3 26.500V6" /><ellipse cx="13" cy="6" rx="10" ry="3.500" /><path d="M23 6v9" /><path d="M14.500 16.500h15v14h-15z" fill="#fff" /><path d="M14.500 16.500h15v3h-15z" fill={G} /><path d="M14.500 23.500h15M14.500 27h15M19.500 19.500v11M24.500 19.500v11" strokeWidth=".9" /></Big>
              Get<DropLine>data<Chevron /></DropLine>
            </BigButton>
            <SmallColumn $w={134}>
              <SmallButton><Small><path d="M5.500 15.500H1.500V.5h8l3.500 3.500v2M9.500.5V4H13" /><path d="M6.500 7H15v9H6.500z" fill="#107c41" stroke="none" /><path d="m9 9.500 3.500 4.500M12.500 9.500 9 14" stroke="#fff" strokeWidth="1.200" /></Small>Excel workbook</SmallButton>
              <SmallButton><Small><circle cx="7.500" cy="8.500" r="6.200" strokeWidth="1.600" /><path d="M2 5.500c3 5 8 6.500 12 5M4.500 3.500c3 5 6 6 9 4M9 2.500c-1 3 1 5.500 4.500 5M3 11c1 2 4 4 7 3" strokeWidth="1.400" /></Small>OneLake data hub<Chevron /></SmallButton>
              <SmallButton><Small><path d="M6 15.500H1.500V.5h8l3.500 3.500v2M9.500.5V4H13" /><path d="M7.500 8v7.500c0 1 7 1 7 0V8" fill="#fff" stroke="#d9730d" /><ellipse cx="11" cy="8" rx="3.500" ry="1.500" fill="#fff" stroke="#d9730d" /></Small>SQL Server</SmallButton>
            </SmallColumn>
            <SmallColumn $w={118}>
              <SmallButton><Small><path d="M8 1h8.500v2.500H8z" fill={G} stroke="none" /><path d="M7 1.500h9.500v14h-14V9M7 5.500h9.500M2.500 10h14M7 5v10.500M11.500 5v10.500" strokeWidth=".9" /><path d="M3.500 0v8M0 4h7.500" stroke="#2e9b4f" strokeWidth="1.200" /></Small>Enter data</SmallButton>
              <SmallButton><Small><ellipse cx="8.500" cy="8.500" rx="2.500" ry="2.500" strokeWidth="1.200" /><path d="M10.500 12C7 15 3.500 11.500 5 8c1.500-4 7-5 9-1.500s0 8-4 8.500M13 4C9 0 3 2 1.500 6.500S3 15 6 14.500" strokeWidth="1.300" /></Small>Dataverse</SmallButton>
              <SmallButton><Small><path d="M6 15.500H2.500V.5h7l3.500 3.500v2M9.500.5V4H13" /><circle cx="11.500" cy="11.500" r="4.300" fill="#fff" stroke={SKY} strokeWidth="1.200" /><path d="M11.500 9v3h2.500" stroke={SKY} /></Small>Recent sources<Chevron /></SmallButton>
            </SmallColumn>
          </GroupBody>
          <GroupName>Data</GroupName>
        </Group>

        <Group $w={117}>
          <GroupBody $pad={8}>
            <BigButton $w={56} $ls={-0.7}>
              <Big w={32}><path d="M1.500 2.500h28v4h-28z" fill={G} stroke="none" /><path d="M29.500 12V2.500h-28v28H10M1.500 6.500h28M1.500 14.500H22M1.500 22.500H15M11 6.500v20M20 6.500V17" strokeWidth=".9" />{pencil}</Big>
              Transform<DropLine>data<Chevron /></DropLine>
            </BigButton>
            <BigButton $w={44} $ls={-0.5}>
              <Big><path d="M12 30.500H3.500v-28h12.500l7 7.500v6M16 2.500V10h7" /><path d="M15 23c.5-7 11-8 13.500-2M29 25c-1 7-11 8-13.500 2M29 16.500v5h-5M15 31v-5h5" stroke="#2e9b4f" strokeWidth="1.300" /></Big>
              Refresh
            </BigButton>
          </GroupBody>
          <GroupName>Queries</GroupName>
        </Group>

        <Group $w={409}>
          <GroupBody $pad={4}>
            <BigButton $w={48}>
              <Big w={32}><path d="M2.500 13.500h8.500v17H2.500z" fill={L} stroke={B} /><path d="M18 7.500h8v23h-8z" fill={G} stroke="#a19f9d" /><path d="M10.500 2.500h8v28h-8z" fill="#fff" /><path d="M23.500 17v15.500M16 24.500h15.500" stroke="#fafafa" strokeWidth="4" /><path d="M23.500 17v15.500M16 24.500h15.500" stroke="#2e9b4f" strokeWidth="1.200" /></Big>
              <span>New</span><span>visual</span>
            </BigButton>
            <Gallery>
              <GalleryGrid>{RIBBON_ICONS.map((n) => <VisualIcon key={n} name={n} s={16} />)}</GalleryGrid>
              <GalleryMore><Chevron /></GalleryMore>
            </Gallery>
            <BigButton $w={48}>
              <Big w={32}><path d="M2.500 4.500h27v24h-27z" fill="#fff" /><g fill={SKY} stroke="none"><path d="M1 3h3v3H1zM28 3h3v3h-3zM1 27h3v3H1zM28 27h3v3h-3z" /></g><path d="m10.500 23.500 5.500-14 5.500 14M12.500 19h7" stroke={SKY} strokeWidth="1.400" /></Big>
              <span>Text</span><span>box</span>
            </BigButton>
            <BigButton $w={42}>
              <Big w={32}><path d="M2.500 13.500h7.500v17H2.500zM18.500 7.500H26v23h-8M10.500 2.500h8v28h-8z" fill="#fff" />{pencil}</Big>
              More<DropLine>visuals<Chevron /></DropLine>
            </BigButton>
          </GroupBody>
          <GroupName>Insert</GroupName>
        </Group>

        <Group $w={188}>
          <GroupBody $pad={7}>
            <BigButton $w={74} $off $ls={-0.4}>
              <Big><path d="M1.500 13.500h8v17h-8z" fill="#e8e6e4" stroke="#c8c6c4" /><path d="M17 7.500h8.500v12H17z" fill="#d3e7f5" stroke="#a9cfea" /><path d="M9.500 2.500h8v28h-8z" fill="#f3f2f1" stroke="#c8c6c4" /><text x="22" y="28" textAnchor="middle" fontFamily="Liberation Serif, serif" fontStyle="italic" fontSize="21" fill="#a8a6a4" stroke="#a8a6a4" strokeWidth=".3">fx</text></Big>
              <span>New visual</span><DropLine>calculation<Chevron c="#c4c2c0" /></DropLine>
            </BigButton>
            <BigButton $w={49} $ls={-0.5}>
              <Big><path d="M5.500 2.500h18v28h-18z" fill="#fff" /><path d="M8.500 6h12v3.500h-12z" fill={L} stroke={B} /><path d="M8 14.500h13M8 20.500h13M8 26.500h13" strokeWidth="3" strokeDasharray="3 2" /></Big>
              <span>New</span><span>measure</span>
            </BigButton>
            <BigButton $w={49} $ls={-0.5}>
              <Big><path d="M6.500 2.500h18v28h-18z" fill="#fff" /><path d="M13 6h8.500v3.500H13z" fill={G} stroke="#8a8886" /><path d="M9 14.500h13M9 20.500h13M9 26.500h13" strokeWidth="3" strokeDasharray="3 2" /><path d="M5 1h7L9.500 7.500h4L2.500 20 5 11H.800z" fill="#fcd28b" stroke="#d9730d" strokeWidth="1.200" /></Big>
              <span>Quick</span><span>measure</span>
            </BigButton>
          </GroupBody>
          <GroupName>Calculations</GroupName>
        </Group>

        <Group $w={74}>
          <GroupBody $pad={0}>
            <BigButton $w={73} $off>
              <Big><path d="M14 2.500H4.500v28h19V17" stroke="#a9cfea" /><path d="m8 21 7-9 5 4-7 9-4 1zM14 15l-4 6M16 8l4-5 4 5-4 6zM23 2l6 6-2 3-7-6z" stroke="#a9cfea" fill="#e9f4fb" strokeWidth="1.200" /></Big>
              <span>Sensitivity</span><DropLine><Chevron c="#b3b0ad" /></DropLine>
            </BigButton>
          </GroupBody>
          <GroupName>Sensitivity</GroupName>
        </Group>

        <Group $w={59}>
          <GroupBody $pad={0}>
            <BigButton $w={59}>
              <Big><path d="M3.500 18.500h9.500v12H3.500zM9 18v-7.500h9M13.500 10V2.500H23v14M18.500 11v19.500H13" /><path d="M23.500 33V18M17.500 23.500l6-6 6 6" stroke={SKY} strokeWidth="1.500" /></Big>
              Publish
            </BigButton>
          </GroupBody>
          <GroupName>Share</GroupName>
        </Group>

        <Group $w={60}>
          <GroupBody $pad={0}>
            <BigButton $w={60}>
              <svg width="30" height="33" viewBox="0 0 30 33">
                <defs>
                  <linearGradient id="cpA" x1="0" y1="0" x2="0" y2="1"><stop offset="0" stopColor="#1496e8" /><stop offset=".5" stopColor="#2bb673" /><stop offset="1" stopColor="#f8c21c" /></linearGradient>
                  <linearGradient id="cpB" x1="0" y1="0" x2="0" y2="1"><stop offset="0" stopColor="#9a4fe8" /><stop offset=".5" stopColor="#ee4f8c" /><stop offset="1" stopColor="#fb8b3c" /></linearGradient>
                </defs>
                <path d="M8 3h12c2 0 3 1 3.500 3l1 4H17c-2 0-2.500 1-3 3l-2 7c-.7 2-1.500 3-3.500 3H4c-3 0-4-2-3-5L5 6c.5-2 1.500-3 3-3z" fill="url(#cpA)" />
                <path d="M22 30H11c-2 0-3-1-3.500-3l-1-4H13c2 0 2.500-1 3-3l2-7c.7-2 1.500-3 3.500-3H26c3 0 4 2 3 5l-4 12c-.5 2-1.500 3-3 3z" fill="url(#cpB)" />
                <path d="M15 3h5c2 0 3 1 3.500 3l1 4h-5C17 10 17 5 15 3z" fill="#1b3fc4" /><path d="M15 30h-4c-2 0-3-1-3.500-3l-1-4H12c2 1 1 5 3 7z" fill="#e8492f" />
              </svg>
              Copilot
            </BigButton>
          </GroupBody>
          <GroupName>Copilot</GroupName>
        </Group>
        <RibbonCollapse><svg width="9" height="7" viewBox="0 0 9 7" fill="none" stroke={D} strokeWidth="1.800"><path d="m1 5.500 3.500-4 3.500 4" /></svg></RibbonCollapse>
      </Ribbon>

      <Work>
        <ViewRail>
          <ViewItem $on><svg width="15" height="15" viewBox="0 0 15 15" fill="none" stroke="#111" strokeWidth="1.200"><path d="M.6 0v14.400H15M3.500 4h2v7.500h-2zM7 7h2v4.500H7zM10.500 2h2v9.500h-2z" /></svg></ViewItem>
          <ViewItem><svg width="17" height="16" viewBox="0 0 17 16" fill="none" stroke="#797775"><path d="M.5.500h16v15H.5zM.5 3.500h16M.5 7.500h16M.5 11.500h16M5.500 3.500v12M11.500 3.500v12" /></svg></ViewItem>
          <ViewItem><svg width="19" height="19" viewBox="0 0 19 19" fill="none" stroke="#797775"><path d="M.5 6.500h8v7h-8zM.5 9h8M11.500.5h7v7h-7zM11.500 3h7M11.500 11.500h7v7h-7zM11.500 14h7M4.500 6V3.500h7M4.500 13.500V16h7" /></svg></ViewItem>
          <ViewItem><svg width="20" height="18" viewBox="0 0 20 18" fill="none" stroke="#797775"><path d="M5.500 10V1.500h6l4 4V14M11.500 1.500v4h4M18 4v11h-3" /><text x="0" y="17" fontSize="6.500" fontWeight="700" fill="#797775" stroke="none" letterSpacing="-.2">DAX</text></svg></ViewItem>
        </ViewRail>

        <Stage>
          <CanvasRow>
            <Canvas>
              <ReportPage>
                <Row $h={66}>
                  <Banner>INCUBATOR HUB HR DATA ANALYSIS<br />TRACKER</Banner>
                  <Slicer>
                    <SlicerHead>Education Field</SlicerHead>
                    <SlicerTiles>
                      {["Human\nResources", "Life Sciences", "Marketing", "Medical", "Other", "Technical\nDegree"].map((t) => (
                        <SlicerTile key={t}>{t.split("\n").map((l, i) => <React.Fragment key={l}>{i > 0 && <br />}{l}</React.Fragment>)}</SlicerTile>
                      ))}
                    </SlicerTiles>
                  </Slicer>
                </Row>
                <Row $h={206}>
                  <KpiCard $w={160} $h={203} $mt={4} $drop={34}><VisualTitle>{"COUNT OF\nEMPLOYEE"}</VisualTitle><KpiValue>1470</KpiValue></KpiCard>
                  <KpiCard $w={160} $h={197} $mt={4} $drop={42}><VisualTitle>{"TOTAL NUMBER\nOF ATTRITION\nCOUNT"}</VisualTitle><KpiValue $shift={4}>237</KpiValue></KpiCard>
                  <KpiCard $w={159} $h={197} $mt={4} $drop={42}><VisualTitle>{"TOTAL NUMBER\nOF CURRENT\nEMPLOYEE"}</VisualTitle><KpiValue $shift={2}>1233</KpiValue></KpiCard>
                  <KpiCard $w={168} $h={207} $mt={0} $pl={13.5} $drop={38}><VisualTitle $top={15}>{"ATTRITION\nRATE"}</VisualTitle><KpiValue $shift={7}>16%</KpiValue></KpiCard>
                  <KpiCard $w={158} $h={203} $mt={4} $drop={23}><VisualTitle>AVERAGE AGE</VisualTitle><KpiValue $shift={4}>37</KpiValue></KpiCard>
                </Row>
                <Row $mt={7}>
                  <ChartPanel $w={312} $mt={1} $mr={8}><VisualTitle>{"ATTRITION COUNT BY\nDEPARTMENT"}</VisualTitle><DepartmentChart /></ChartPanel>
                  <ChartPanel $w={312} $mr={15}><VisualTitle>{"ATTRITION COUNT BY EDUCATION\nFIELD"}</VisualTitle><EducationChart /></ChartPanel>
                  <ChartPanel $w={204}><VisualTitle>{"ATTRITION COUNT BY\nGENDER"}</VisualTitle><GenderChart /></ChartPanel>
                </Row>
              </ReportPage>
            </Canvas>
            <FilterPane>
              <DoubleChevron flip c="#fff" w={1.5} />
              <svg width="13" height="13" viewBox="0 0 13 13" fill="none" stroke="#fff" strokeWidth="1.600"><path d="M13 1v11L8.500 8H2V5h6.500z" /></svg>
              <FilterText>Filters</FilterText>
            </FilterPane>
          </CanvasRow>
          <PageBar>
            <LayoutSwitch>
              <DesktopView><svg width="24" height="16" viewBox="0 0 24 16" fill="none" stroke="#605e5c" strokeWidth="1.200"><path d="M2.600 1.600h18v10.800h-18zM11.600 12.500v2.500M8 15h7.500" /></svg></DesktopView>
              <PhoneView><svg width="14" height="20" viewBox="0 0 14 20" fill="none" stroke="#605e5c" strokeWidth="1.300"><rect x=".8" y=".8" width="12" height="18.400" rx="1" /><path d="M5.800 16.500h2" /></svg></PhoneView>
              <Arrows>
                <svg width="5" height="8" viewBox="0 0 5 8" fill="#c8c6c4"><path d="M5 0v8L0 4z" /></svg>
                <svg width="5" height="8" viewBox="0 0 5 8" fill="#c8c6c4"><path d="M0 0v8l5-4z" /></svg>
              </Arrows>
            </LayoutSwitch>
            <PageTab $w={77}>Page 1</PageTab>
            <PageTab $w={98}>Table page</PageTab>
            <PageTab $w={78} $on>Page 2</PageTab>
            <AddPage><svg width="11" height="11" viewBox="0 0 11 11" stroke="#fff" strokeWidth="3"><path d="M5.500 0v11M0 5.500h11" /></svg></AddPage>
          </PageBar>
        </Stage>

        <Pane $w={181}>
          <PaneHead><h3>Format</h3><Dots /><DoubleChevron /></PaneHead>
          <PaneSearch><Magnifier s={14} />Search</PaneSearch>
          {["Page information", "Canvas settings", "Canvas background", "Wallpaper", "Filter pane", "Filter cards"].map((t) => (
            <FormatRow key={t}><svg width="8" height="12" viewBox="0 0 8 12" fill="none" stroke={D}><path d="m1 1 5 5-5 5" /></svg>{t}</FormatRow>
          ))}
        </Pane>
        <Pane $w={181}>
          <PaneHead><h3>Build</h3><Dots /><DoubleChevron /></PaneHead>
          <FieldLabel>Suggestions</FieldLabel>
          <VisualPicker>{BUILD_ICONS.map((n) => <VisualIcon key={n} name={n} s={18} />)}</VisualPicker>
          <FieldLabel>Data</FieldLabel>
          <DropZone><AddData>+Add data</AddData></DropZone>
        </Pane>
        <PaneRail>
          <RailButton $h={32}><svg width="15" height="18" viewBox="0 0 15 18" fill="none" stroke={D} strokeWidth="1.200"><ellipse cx="7.500" cy="3.500" rx="6.500" ry="2.800" /><path d="M1 3.500v11c0 3.500 13 3.500 13 0v-11" /></svg></RailButton>
          <RailButton $h={32} $on><svg width="19" height="19" viewBox="0 0 19 19" fill="none" stroke={D}><path d="M1.500 7.500h5v10h-5zM12 4.500h4.500V7M6.500 1.500h5v16h-5z" fill="#fff" /><path d="M10.500 9.500v7c0 2 7.500 2 7.500 0v-7" fill="#fff" stroke="#d9730d" /><ellipse cx="14.200" cy="9.500" rx="3.800" ry="1.600" fill="#fff" stroke="#d9730d" /></svg></RailButton>
          <RailButton $h={32} $on><svg width="19" height="19" viewBox="0 0 19 19" fill="none" stroke={D}><path d="M1.500 7.500h5v10h-5zM12 4.500h4.500V7M6.500 1.500h5v12h-5z" fill="#fff" /><path d="m18 6-7.500 8-1.500-1.500 8-7.500z" fill="#fff" /><path d="M3 17.500c2 0 2-4 5-4.500 2 0 3 2 2 3.500s-5 2-7 1z" fill={L} stroke={B} /></svg></RailButton>
          <RailButton $h={32}><svg width="17" height="17" viewBox="0 0 17 17" stroke="#111" strokeWidth="1.200"><path d="M8.500 0v17M0 8.500h17" /></svg></RailButton>
          <RailSettings>
            <svg width="20" height="20" viewBox="0 0 20 20" fill="none" stroke={D} strokeWidth="1.300"><path d="M8 1h4l.8 2.800 1.700 1L17.300 4l2 3.500-2 2v1l2 2-2 3.500-2.800-.8-1.700 1L12 19H8l-.8-2.800-1.700-1-2.800.8-2-3.500 2-2v-1l-2-2 2-3.500 2.800.8 1.700-1z" /><circle cx="10" cy="10" r="3.200" /></svg>
          </RailSettings>
        </PaneRail>
      </Work>

      <StatusBar>
        Page 3 of 3
        <ZoomControls>
          <svg width="122" height="16" viewBox="1155 0 122 16" stroke="#605e5c"><path d="M1155 8.500h4" strokeWidth="1.500" /><path d="M1163 7.500h100M1213.500 5v5M1269 8h8M1273 4v8" /><path d="M1194 2h4v11h-4z" fill="#605e5c" stroke="none" /></svg>
          <span>69%</span>
          <svg width="16" height="12" viewBox="0 0 16 12" fill="none" stroke="#605e5c"><path d="M.5.500h15v11H.5zM3 5V3h2.500M13 5V3h-2.500M3 7v2h2.500M13 7v2h-2.500" /></svg>
        </ZoomControls>
      </StatusBar>

      <Taskbar>
        <StartButton><svg width="16" height="16" viewBox="0 0 16 16"><path d="M0 2.300 6.500 1.400v6.200H0zM7.300 1.300 16 0v7.600H7.300zM0 8.400h6.500v6.200L0 13.700zM7.300 8.400H16V16l-8.700-1.300z" fill="#000" /></svg></StartButton>
        <TaskSearch><Magnifier c="#111" s={17} /><span>Type here to search</span><Owl /></TaskSearch>
        <TaskItem $w={48}><svg width="17" height="16" viewBox="0 0 17 16" fill="none" stroke="#111" strokeWidth="1.200"><path d="M.6 0v2.500h11V0M.6 4.700h11v6.600H.6zM.6 16v-2.500h11V16M15 0v3M15 9v7" /><path d="M13.500 4.500h3v3h-3z" fill="#111" stroke="none" /></svg></TaskItem>
        <TaskItem $w={53}>
          <svg width="25" height="25" viewBox="0 0 24 24">
            <defs><linearGradient id="eg" x1="0" y1="0" x2="1" y2=".3"><stop offset="0" stopColor="#1f9ae0" /><stop offset=".55" stopColor="#27bcd4" /><stop offset="1" stopColor="#5fdc58" /></linearGradient></defs>
            <path d="M1 10C2 4 6.500 0 12 0c7 0 12 5 12 10 0 4-3 6-6.500 6-3 0-4.200-1-3.500-2.300 2-3-1-6.700-4.500-6.700C5 7 2 9 1 10z" fill="url(#eg)" />
            <path d="M0 12C1 8 5 6.800 8.500 7c-2 1.500-3 4-2.500 7 1 5 6 8 10 7.500-6 4.500-16 1.500-16-9.500z" fill="#1765c0" />
            <path d="M10 8.500c-4 3-3 9 1.500 11.500 4 2.300 8.500 1 11-2-1.500 4-6 6.500-10.500 6-6-1-9-6-7-11 1-2.500 3-4.500 5-4.500z" fill="#114a8b" />
          </svg>
        </TaskItem>
        <TaskItem $w={44}><svg width="22" height="20" viewBox="0 0 22 20"><path d="M1 1h7l2 2h11v15H1z" fill="#e0a019" /><path d="M0 4h22v15H0z" fill="#ffd866" /><path d="M4 19v-7l2-2h10l2 2v7h-4v-4H8v4z" fill="#3f98dd" /></svg></TaskItem>
        <TaskItem $w={54}><svg width="23" height="24" viewBox="0 0 23 24"><path d="M6 6V3c0-1.500 1-2 2-2h7c1 0 2 .500 2 2v3" fill="none" stroke="#2bb2ee" strokeWidth="1.800" /><path d="M0 5h23v15c0 2-1 4-4 4H4c-3 0-4-2-4-4z" fill="#16508c" /><path d="M7 10h4v4H7z" fill="#f25022" /><path d="M12 10h4v4h-4z" fill="#7fba00" /><path d="M7 15h4v4H7z" fill="#00a4ef" /><path d="M12 15h4v4h-4z" fill="#ffb900" /></svg></TaskItem>
        <TaskItem $w={46}><svg width="24" height="23" viewBox="0 0 24 23"><path d="M0 8 12 0l12 8v4H0z" fill="#0f4f94" /><path d="M2 8h20v8H2z" fill="#f4f7fa" /><path d="M0 8l12 8 12-8v15H0z" fill="#2ea7ea" /><path d="M12 15 24 8v15z" fill="#50c8f4" /></svg></TaskItem>
        <TaskItem $w={52}><svg width="24" height="24" viewBox="0 0 24 24"><path d="M12 12 1.600 6a12 12 0 0 1 20.800 0z" fill="#e33b2e" /><path d="M12 12 12 24A12 12 0 0 1 1.600 6z" fill="#279847" /><path d="M12 6h10.400A12 12 0 0 1 12 24l5-9z" fill="#fcc31e" /><circle cx="12" cy="12" r="6" fill="#fff" /><circle cx="12" cy="12" r="4.800" fill="#3b7de9" /></svg></TaskItem>
        <TaskItem $w={46} $run><svg width="24" height="24" viewBox="0 0 24 24"><circle cx="12" cy="12" r="12" fill="#1ed760" /><g fill="none" stroke="#0b0b0b" strokeLinecap="round"><path d="M4.800 8.500c5-1.500 10-1 14.500 1.500" strokeWidth="2.400" /><path d="M5.500 12.500c4-1.200 8.500-.700 12.300 1.400" strokeWidth="2" /><path d="M6.200 16c3.300-.900 7-.6 10 1.200" strokeWidth="1.600" /></g></svg></TaskItem>
        <TaskItem $w={48} $active><svg width="24" height="24" viewBox="0 0 24 24"><path d="M0 0h24v24H0z" fill="#0a77d5" /><path d="M13 4h6v16h-6z" fill="#d98f0c" /><path d="M9 8h6v12H9z" fill="#efb71f" /><path d="M5 12h6v8H5z" fill="#f9dc68" /></svg></TaskItem>
        <TaskItem $w={50} $run><svg width="23" height="23" viewBox="0 0 23 23"><path d="M3 3v11c0 2 12 2 12 0V3z" fill="#fcd53a" /><path d="M3 3v11c0 1 3 1.400 5 1.400V3z" fill="#fde477" /><ellipse cx="9" cy="3" rx="6" ry="2.300" fill="#eda545" /><path d="M17 1h5v6M1 17v5h6" fill="none" stroke="#4a9b4e" strokeWidth="2" /><path d="m10 21 8-8M12 13l8 8M9.500 12.500l3 3M17.500 12v3h3" stroke="#a95fcf" strokeWidth="1.800" fill="none" /></svg></TaskItem>
        <Tray>
          <Weather>
            <svg width="25" height="24" viewBox="0 0 25 24"><path d="M13 0c8 2 12 10 9 17-3 6-14 8-20 2 10 1 15-8 11-19z" fill="#f5a524" /><path d="M3 9c-3 0-3-4 0-4 0-4 6-5 7-1 4-1 5 5 1 5z" fill="#b5d0f5" stroke="#7ba6dc" strokeWidth=".6" /><path d="M13 21c-4 0-3-5 0-4 0-5 6-5 7-1 5-1 5 5 1 5z" fill="#cfe0f8" stroke="#8db2e2" strokeWidth=".6" /></svg>
            <span>28°C</span><span>Partly cloudy</span>
          </Weather>
          <svg width="140" height="24" viewBox="1102 736 140 24" fill="none" stroke="#111" strokeWidth="1.300">
            <path d="m1105.500 751 5.500-5.500 5.500 5.500" />
            <path d="M1129 748h12M1131 748l3.500-4.500h3M1134 748l3 4h2" strokeWidth="1.300" /><path d="M1137 741.500h3.500v3.500h-3.500zM1138.500 750.500h3v3h-3z" strokeWidth="1.100" /><circle cx="1129" cy="748" r="1.800" fill="#111" />
            <path d="M1154.500 744.500h7v8h-7zM1161.500 748l3-2v5l-3-2M1155 742c2-1.500 5-1.500 7 0M1155 755c2 1.500 5 1.500 7 0" />
            <path d="M1179 753.500c-5 0-5-6 0-6 1-5 8-5 9.500-.5 2.500 0 3.500 2 3 4" fill="#8a8886" /><circle cx="1186.500" cy="751.500" r="5" fill="#1976d2" stroke="#e3dcec" /><path d="M1184 751c.5-2.500 4-2.500 5-.5M1189 752c-.5 2.500-4 2.500-5 .5" stroke="#fff" strokeWidth="1" />
            <circle cx="1206.500" cy="747.500" r="7" strokeWidth="1.100" /><ellipse cx="1206.500" cy="747.500" rx="3" ry="7" strokeWidth="1" /><path d="M1200 745h13M1200 750h8" strokeWidth="1" /><circle cx="1211.500" cy="752" r="3.600" fill="#e3dcec" strokeWidth="1.100" /><path d="m1209 749.500 5 5" strokeWidth="1.100" />
            <path d="M1223.500 746h2.500l3.500-3.500v11L1226 750h-2.500zM1232 745.500c1 1.500 1 3.500 0 5M1234.500 743.500c2 2.500 2 6.500 0 9M1237 741.500c3 3.500 3 9.500 0 13" strokeWidth="1.100" />
          </svg>
          <Clock>1:01 pm<br />29/10/2024</Clock>
          <svg width="46" height="40" viewBox="1320 728 46 40"><path d="M1325 740h16v12h-9l-4 3.500V752h-3z" fill="#000" /><path d="M1328 743.500h10M1328 746h10M1328 748.500h7" stroke="#e3dcec" /><circle cx="1340" cy="755" r="8" fill="#cfcbd3" stroke="#8a8886" /><text x="1340" y="759" fontSize="11" textAnchor="middle" fill="#111">2</text><path d="M1361.500 728v40" stroke="#b5afbf" /></svg>
        </Tray>
      </Taskbar>
    </Window>
  );
}
